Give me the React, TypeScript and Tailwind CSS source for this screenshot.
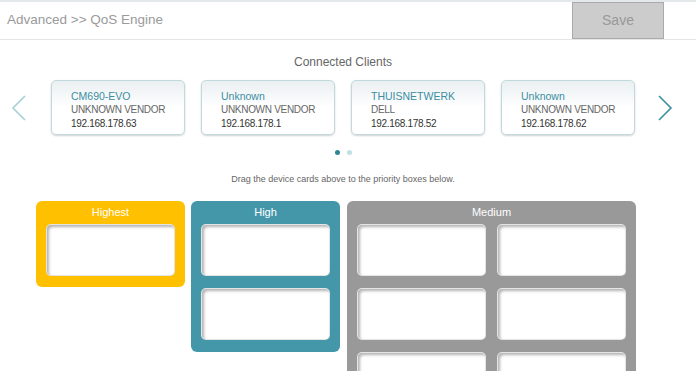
import React from 'react';

interface Client {
  name: string;
  vendor: string;
  ip: string;
}

const clients: Client[] = [
  { name: 'CM690-EVO', vendor: 'UNKNOWN VENDOR', ip: '192.168.178.63' },
  { name: 'Unknown', vendor: 'UNKNOWN VENDOR', ip: '192.168.178.1' },
  { name: 'THUISNETWERK', vendor: 'DELL', ip: '192.168.178.52' },
  { name: 'Unknown', vendor: 'UNKNOWN VENDOR', ip: '192.168.178.62' },
];

function ClientCard({ client }: { client: Client }) {
  return (
    <div className="w-[134px] h-[55px] shrink-0 rounded-[5px] border border-[#bfd9dd] bg-gradient-to-b from-[#eaeff1] via-white to-white shadow-[0_1px_2px_rgba(0,0,0,0.18)] pl-[19px] pt-[8px]">
      <div className="text-[10.5px] leading-[14px] text-[#3b8ea2]">{client.name}</div>
      <div className="text-[10px] leading-[14px] tracking-[-0.3px] text-[#666666]">{client.vendor}</div>
      <div className="text-[10px] leading-[14px] tracking-[-0.3px] text-[#333333]">{client.ip}</div>
    </div>
  );
}

function Slot() {
  return (
    <div className="h-[52px] rounded-[5px] bg-white border border-black/10 shadow-[inset_2px_2px_3px_rgba(0,0,0,0.3)]" />
  );
}

function Arrow({ dir, color }: { dir: 'left' | 'right'; color: string }) {
  return (
    <svg width="16" height="26" viewBox="0 0 16 26" className="shrink-0">
      <polyline
        points={dir === 'left' ? '14,1 2,13 14,25' : '2,1 14,13 2,25'}
        fill="none"
        stroke={color}
        strokeWidth="1.6"
      />
    </svg>
  );
}

export default function App() {
  return (
    <div className="w-[696px] h-[371px] overflow-hidden bg-white font-['Liberation_Sans',Arial,sans-serif]">
      <div className="h-[2px] bg-[#e3e8eb]" />
      <div className="flex h-[38px] border-b border-[#e6e6e6]">
        <div className="flex items-center pl-[7px] text-[13.5px] text-[#9a9a9a]">Advanced &gt;&gt; QoS Engine</div>
        <button className="ml-auto mr-[32px] w-[92px] bg-[#cccccc] border border-[#aaaaaa] text-[14px] text-[#999999]">
          Save
        </button>
      </div>

      <div className="w-[686px] flex flex-col items-center">
        <div className="mt-[15px] text-[12px] leading-[14px] text-[#666666]">Connected Clients</div>
        <div className="mt-[11px] flex items-center w-[686px] pl-[11px]">
          <Arrow dir="left" color="#a6cfd6" />
          <div className="ml-[24px] flex gap-[16px]">
            {clients.map((c, i) => (
              <ClientCard key={i} client={c} />
            ))}
          </div>
          <div className="ml-[22px]">
            <Arrow dir="right" color="#3b8ea2" />
          </div>
        </div>
        <div className="mt-[15px] flex gap-[7px]">
          <div className="w-[5px] h-[5px] rounded-full bg-[#2e8893]" />
          <div className="w-[5px] h-[5px] rounded-full bg-[#bfe0e4]" />
        </div>
        <div className="mt-[18px] text-[9px] leading-[12px] text-[#666666]">
          Drag the device cards above to the priority boxes below.
        </div>
      </div>

      <div className="mt-[16px] pl-[36px] flex items-start gap-[6px]">
        <div className="w-[149px] rounded-[6px] bg-[#ffc000] px-[10px] pb-[11px]">
          <div className="h-[23px] flex items-center justify-center text-[11px] text-white">Highest</div>
          <Slot />
        </div>
        <div className="w-[149px] rounded-[6px] bg-[#4397a9] px-[10px] pb-[12px]">
          <div className="h-[23px] flex items-center justify-center text-[11px] text-white">High</div>
          <div className="flex flex-col gap-[12px]">
            <Slot />
            <Slot />
          </div>
        </div>
        <div className="ml-[1px] w-[289px] rounded-[6px] bg-[#999999] px-[10px] pb-[12px]">
          <div className="h-[23px] flex items-center justify-center text-[11px] text-white">Medium</div>
          <div className="grid grid-cols-2 gap-x-[11px] gap-y-[12px]">
            <Slot />
            <Slot />
            <Slot />
            <Slot />
            <Slot />
            <Slot />
          </div>
        </div>
      </div>
    </div>
  );
}
